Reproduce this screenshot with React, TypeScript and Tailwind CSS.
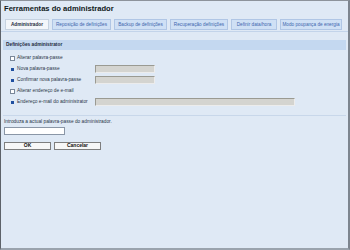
import React from 'react';

const tabs = [
  { label: 'Administrador', w: 'w-[44px]', active: true },
  { label: 'Reposição de definições', w: 'w-[59px]' },
  { label: 'Backup de definições', w: 'w-[53px]' },
  { label: 'Recuperação definições', w: 'w-[58px]' },
  { label: 'Definir data/hora', w: 'w-[46px]' },
  { label: 'Modo poupança de energia', w: 'w-[62px]' },
];

function Check({ label }: { label: string }) {
  return (
    <div className="flex items-center h-[8px] pl-[9px]">
      <span className="w-[5px] h-[5px] bg-white border border-[#7a8799] mr-[2px]" />
      <span>{label}</span>
    </div>
  );
}

function Field({ label, wide }: { label: string; wide?: boolean }) {
  return (
    <div className="flex items-center h-[8px] pl-[10px]">
      <span className="w-[3px] h-[3px] bg-[#1f4fa0] mr-[3px]" />
      <span className="w-[78px]">{label}</span>
      <span
        className={`${wide ? 'w-[200px]' : 'w-[60px]'} h-[8px] bg-[#d4d4d0] border-t border-l border-[#9a9a92] border-b border-r border-b-[#ececec] border-r-[#ececec]`}
      />
    </div>
  );
}

export default function App() {
  return (
    <div
      className="w-[350px] h-[250px] bg-[#dfe9f5] border-t border-t-[#8d939b] border-l border-l-[#5d6269] border-r-2 border-r-[#7d858f] border-b-2 border-b-[#9aa3ad] text-[#1c2a3c] flex flex-col"
      style={{ fontFamily: '"Liberation Sans", Arial, sans-serif' }}
    >
      <div className="pl-[3px] pt-[2px] h-[18px] text-[7.6px] font-bold text-[#101820] leading-[12px]">
        Ferramentas do administrador
      </div>

      <div className="flex items-end h-[13px] pl-[4px] border-b border-[#c3d4ea] text-[4.7px]">
        {tabs.map((t) => (
          <div
            key={t.label}
            className={`${t.w} h-[11px] mr-[3px] mb-[1px] flex items-center justify-center border ${
              t.active
                ? 'bg-[#f3f6fa] border-[#c6d2e0] font-bold text-[#1d2b3d]'
                : 'bg-[#cfe0f5] border-[#b0c6e5] text-[#3e66ad]'
            }`}
          >
            {t.label}
          </div>
        ))}
      </div>

      <div className="mt-[8px] mx-[2px] h-[10px] bg-[#c4d8f0] pl-[3px] flex items-center text-[4.8px] font-bold text-[#1d2b3d]">
        Definições administrator
      </div>

      <div className="flex flex-col gap-[3px] mt-[4px] text-[4.8px] text-[#2a3648]">
        <Check label="Alterar palavra-passe" />
        <Field label="Nova palavra-passe" />
        <Field label="Confirmar nova palavra-passe" />
        <Check label="Alterar endereço de e-mail" />
        <Field label="Endereço e-mail do administrator" wide />
      </div>

      <div className="mt-[9px] mx-[2px] border-t border-[#c8d7ea]" />

      <div className="pl-[3px] mt-[3px] text-[4.8px] text-[#2a3648] leading-[6px]">
        Introduza a actual palavra-passe do administrador.
      </div>
      <div className="ml-[3px] mt-[2px] w-[61px] h-[8px] bg-white border border-[#8a96a6]" />

      <div className="flex gap-[3px] ml-[3px] mt-[7px] text-[5px] font-bold text-[#111]">
        <div className="w-[47px] h-[8px] bg-[#f7f7f7] border border-[#7e7e7e] flex items-center justify-center">
          OK
        </div>
        <div className="w-[47px] h-[8px] bg-[#f7f7f7] border border-[#7e7e7e] flex items-center justify-center">
          Cancelar
        </div>
      </div>
    </div>
  );
}
